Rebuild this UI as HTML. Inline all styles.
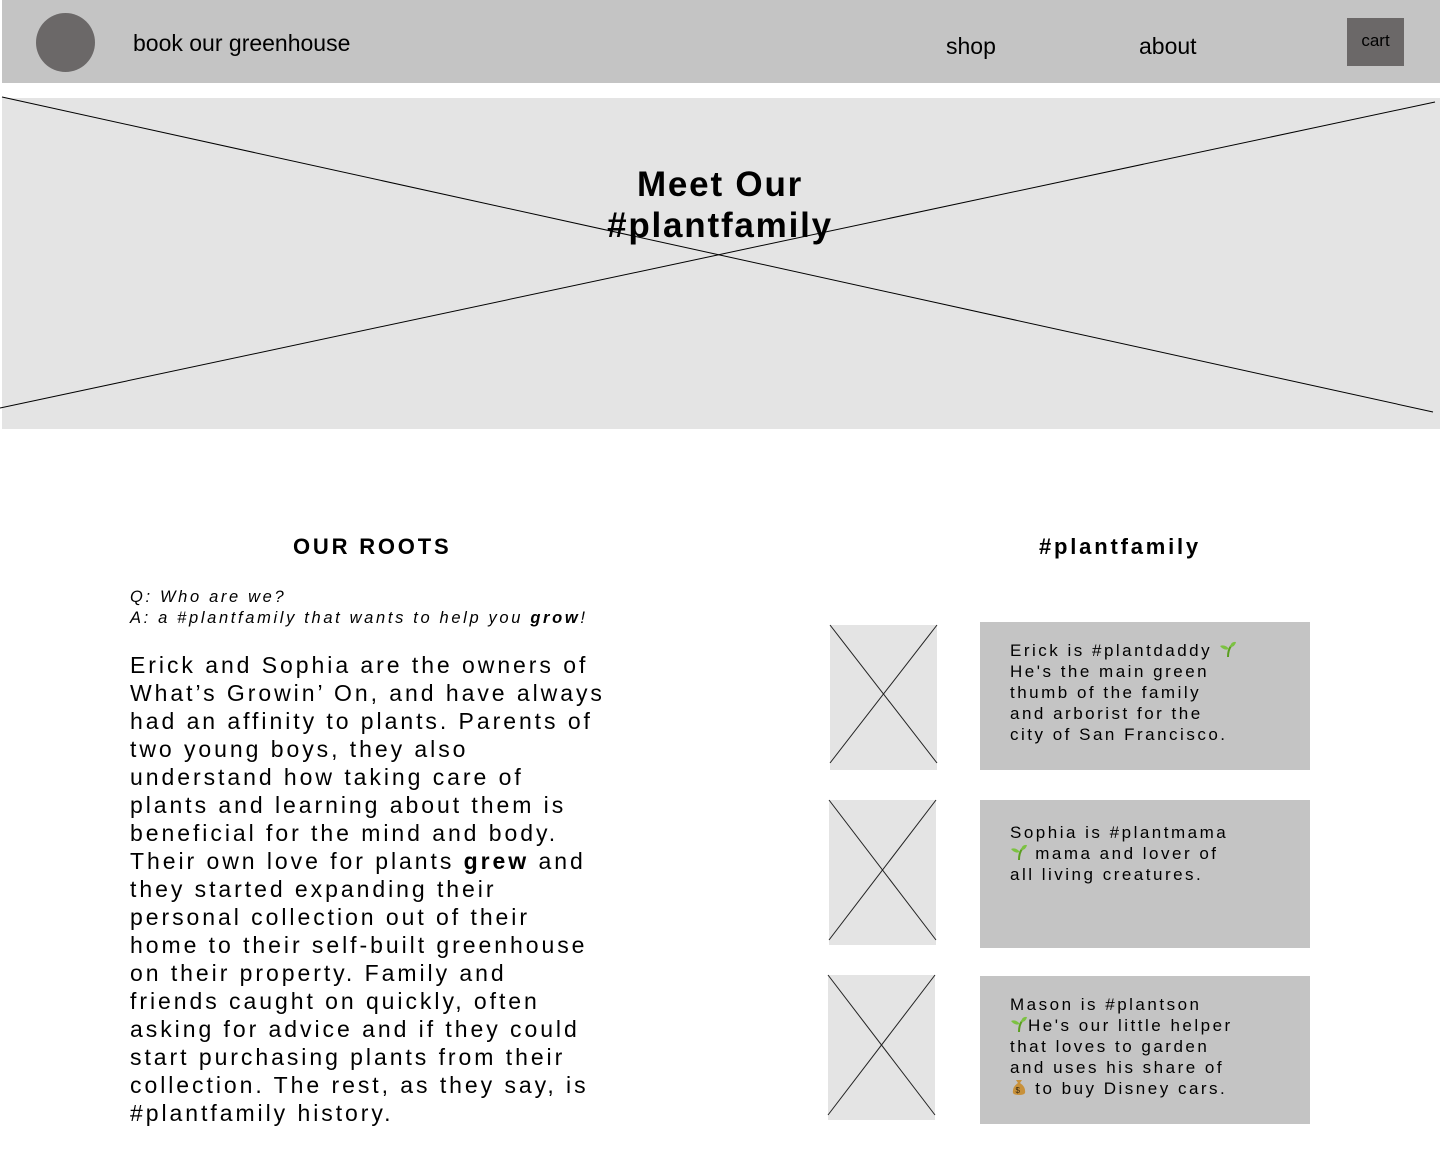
<!DOCTYPE html>
<html><head><meta charset="utf-8"><style>
*{margin:0;padding:0;box-sizing:border-box}
body{width:1440px;height:1152px;background:#fff;position:relative;overflow:hidden;font-family:"Liberation Sans",sans-serif;color:#000}
.a{position:absolute}
.hdr{left:2px;top:0;width:1438px;height:83px;background:#c4c4c4}
.nav{font-size:23px;line-height:28px}
.cart{left:1347px;top:18px;width:57px;height:48px;background:#6b6868;font-size:17px;text-align:center;line-height:46px}
.hero{left:2px;top:98px;width:1438px;height:331px;background:#e4e4e4}
.title{left:520px;top:164px;width:400px;text-align:center;font-size:35px;font-weight:bold;line-height:41px;letter-spacing:1.8px}
.h2{font-size:22px;font-weight:bold;letter-spacing:2.8px}
.qa{left:130px;top:587px;font-size:16.5px;font-style:italic;line-height:21px;letter-spacing:2.65px}
.body{left:130px;top:651px;font-size:23px;line-height:28px;letter-spacing:2.95px;white-space:nowrap}
.card{left:980px;width:330px;background:#c4c4c4;padding:18px 0 0 30px;font-size:17px;line-height:21px;letter-spacing:2.5px;white-space:nowrap}
svg.sp{width:18px;height:18px;vertical-align:-2px}
</style></head><body>
<div class="a hdr"></div>
<div class="a" style="left:36px;top:13px;width:59px;height:59px;border-radius:50%;background:#6b6868"></div>
<div class="a nav" style="left:133px;top:29px">book our greenhouse</div>
<div class="a nav" style="left:946px;top:32px">shop</div>
<div class="a nav" style="left:1139px;top:32px">about</div>
<div class="a cart">cart</div>
<div class="a hero"></div>
<svg class="a" style="left:0;top:0" width="1440" height="440"><line x1="2" y1="97" x2="1433" y2="412" stroke="#000" stroke-width="1"/><line x1="0" y1="408" x2="1435" y2="102" stroke="#000" stroke-width="1"/></svg>
<div class="a title">Meet Our<br>#plantfamily</div>
<div class="a h2" style="left:293px;top:534px">OUR ROOTS</div>
<div class="a h2" style="left:1039px;top:534px">#plantfamily</div>
<div class="a qa">Q: Who are we?<br>A: a #plantfamily that wants to help you <b>grow</b>!</div>
<div class="a body">Erick and Sophia are the owners of<br>What’s Growin’ On, and have always<br>had an affinity to plants. Parents of<br>two young boys, they also<br>understand how taking care of<br>plants and learning about them is<br>beneficial for the mind and body.<br>Their own love for plants <b>grew</b> and<br>they started expanding their<br>personal collection out of their<br>home to their self-built greenhouse<br>on their property. Family and<br>friends caught on quickly, often<br>asking for advice and if they could<br>start purchasing plants from their<br>collection. The rest, as they say, is<br>#plantfamily history.</div>
<svg class="a" style="left:0;top:600px" width="1440" height="540">
<rect x="830" y="25" width="107" height="145" fill="#e4e4e4"/><line x1="830" y1="25" x2="937" y2="163" stroke="#222"/><line x1="937" y1="25" x2="830" y2="163" stroke="#222"/>
<rect x="829" y="200" width="107" height="145" fill="#e4e4e4"/><line x1="829" y1="200" x2="936" y2="340" stroke="#222"/><line x1="936" y1="200" x2="829" y2="340" stroke="#222"/>
<rect x="828" y="375" width="107" height="145" fill="#e4e4e4"/><line x1="828" y1="375" x2="935" y2="515" stroke="#222"/><line x1="935" y1="375" x2="828" y2="515" stroke="#222"/>
</svg>
<div class="a card" style="top:622px;height:148px">Erick is #plantdaddy <svg class="sp" viewBox="0 0 18 18"><path d="M9 17 Q9 10 12 6" stroke="#5a9e1f" stroke-width="2" fill="none"/><path d="M11 7 Q12 1 17 2 Q16 7 11 7Z" fill="#7cc242"/><path d="M10 9 Q6 4 1 6 Q5 11 10 9Z" fill="#7cc242"/></svg><br>He's the main green<br>thumb of the family<br>and arborist for the<br>city of San Francisco.</div>
<div class="a card" style="top:800px;height:148px;padding-top:22px">Sophia is #plantmama<br><svg class="sp" viewBox="0 0 18 18"><path d="M9 17 Q9 10 12 6" stroke="#5a9e1f" stroke-width="2" fill="none"/><path d="M11 7 Q12 1 17 2 Q16 7 11 7Z" fill="#7cc242"/><path d="M10 9 Q6 4 1 6 Q5 11 10 9Z" fill="#7cc242"/></svg> mama and lover of<br>all living creatures.</div>
<div class="a card" style="top:976px;height:148px">Mason is #plantson<br><svg class="sp" viewBox="0 0 18 18"><path d="M9 17 Q9 10 12 6" stroke="#5a9e1f" stroke-width="2" fill="none"/><path d="M11 7 Q12 1 17 2 Q16 7 11 7Z" fill="#7cc242"/><path d="M10 9 Q6 4 1 6 Q5 11 10 9Z" fill="#7cc242"/></svg>He's our little helper<br>that loves to garden<br>and uses his share of<br><svg class="sp" viewBox="0 0 18 18"><path d="M6 2 L12 2 L10 5 Q16 9 15 15 Q14 17 9 17 Q4 17 3 15 Q2 9 8 5Z" fill="#c8913a"/><text x="9" y="15" font-size="8" text-anchor="middle" fill="#3a2a10" font-family="Liberation Sans">$</text></svg> to buy Disney cars.</div>
</body></html>
